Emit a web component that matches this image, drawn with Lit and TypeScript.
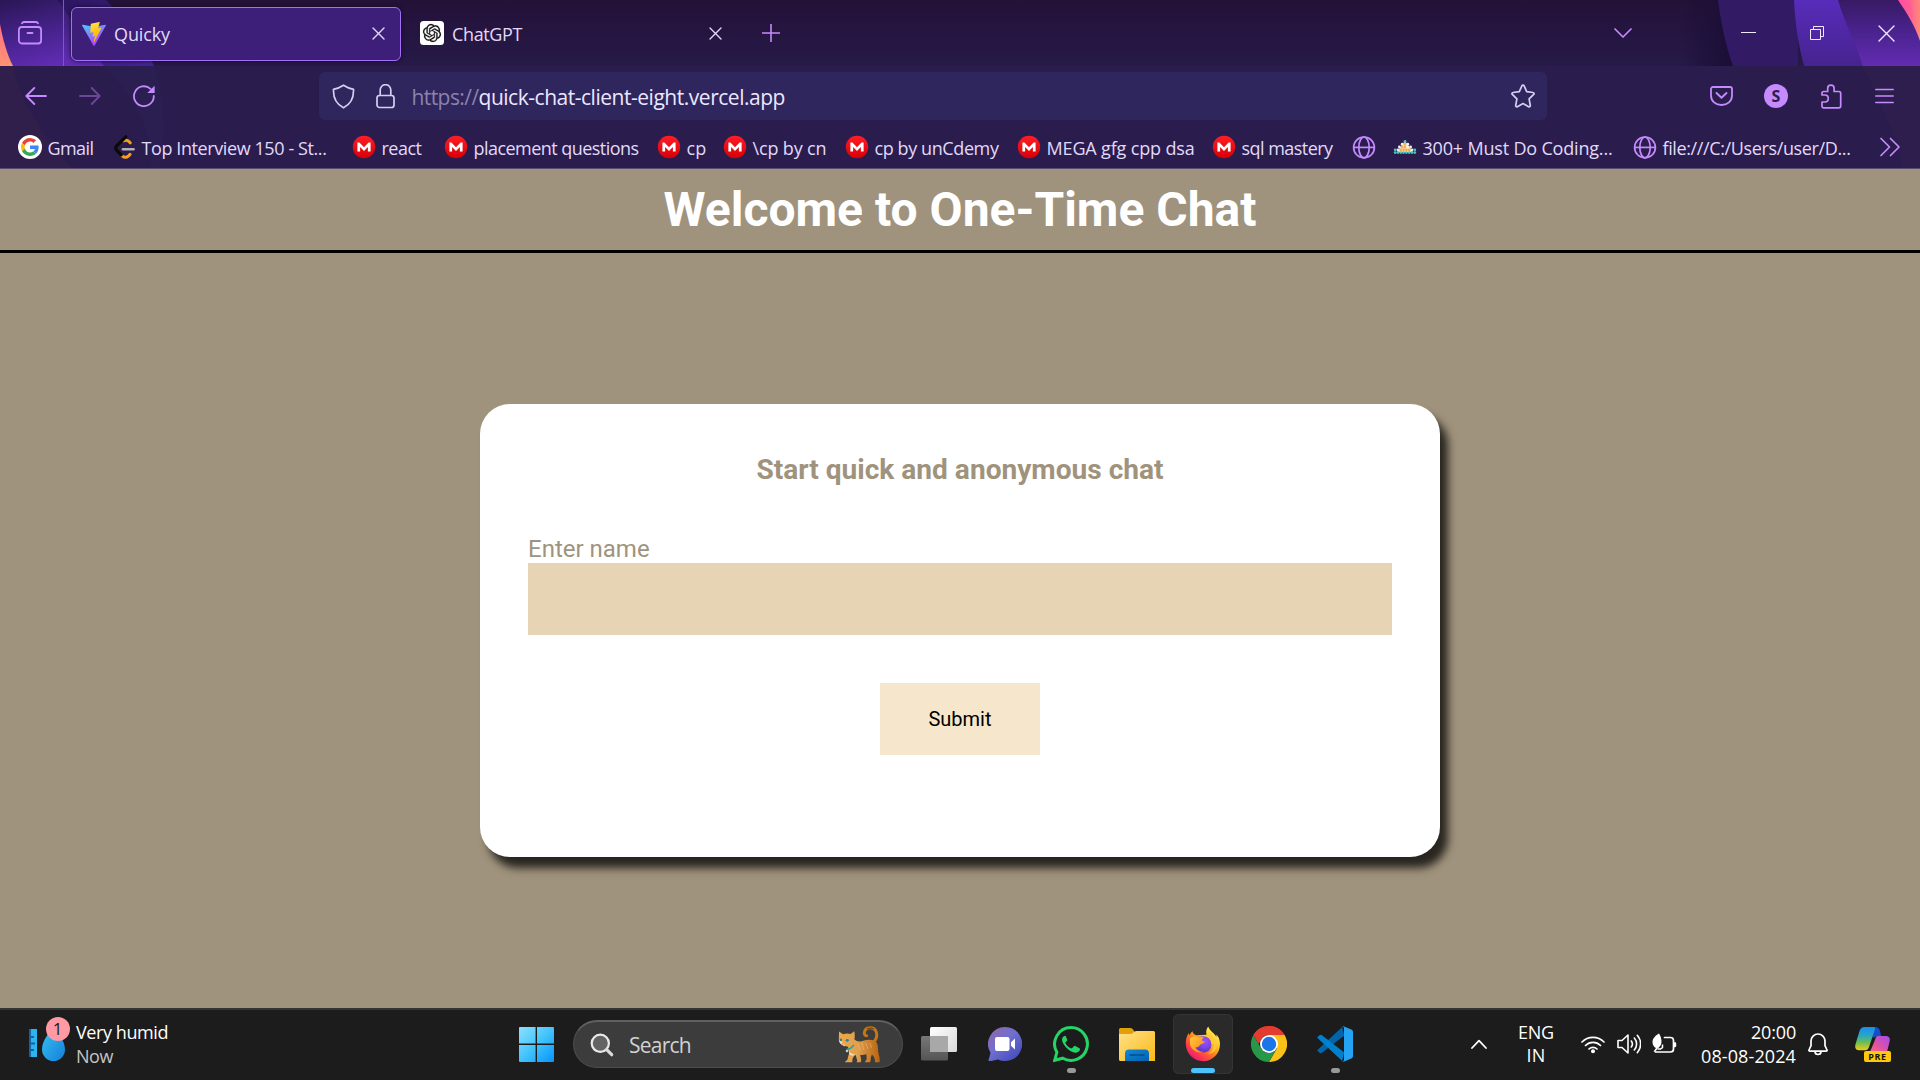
import { LitElement, html, svg, css, TemplateResult } from "lit";
import { customElement, property } from "lit/decorators.js";

/** A one-line label whose letter spacing is tuned so that it fills a set width. */
@customElement("fitted-text")
class FittedText extends LitElement {
  @property({ type: Number }) width = 0;
  static styles = css`
    :host { display: block; white-space: pre; flex: none; }
    .label { display: inline-block; }
  `;
  firstUpdated() {
    const label = this.renderRoot.querySelector<HTMLElement>(".label")!;
    const count = (this.textContent || "").length || 1;
    const natural = label.getBoundingClientRect().width;
    label.style.letterSpacing = `${(this.width - natural) / count}px`;
    this.style.width = `${this.width}px`;
  }
  render() {
    return html`<span class="label"><slot></slot></span>`;
  }
}

const icon = (w: number, h: number, body: TemplateResult, box = `0 0 ${w} ${h}`) =>
  html`<svg class="icon" width=${w} height=${h} viewBox=${box} fill="none">${body}</svg>`;

const googleIcon = icon(24, 24, svg`
  <circle cx="12" cy="12" r="12" fill="#fff"/>
  <g transform="translate(3 3) scale(.375)">
    <path fill="#EA4335" d="M24 9.5c3.54 0 6.71 1.22 9.21 3.6l6.85-6.85C35.9 2.38 30.47 0 24 0 14.62 0 6.51 5.38 2.56 13.22l7.98 6.19C12.43 13.72 17.74 9.5 24 9.5z"/>
    <path fill="#4285F4" d="M46.98 24.55c0-1.57-.15-3.09-.38-4.55H24v9.02h12.94c-.58 2.96-2.26 5.48-4.78 7.18l7.73 6c4.51-4.18 7.09-10.36 7.09-17.65z"/>
    <path fill="#FBBC05" d="M10.53 28.59c-.48-1.45-.76-2.99-.76-4.59s.27-3.14.76-4.59l-7.98-6.19C.92 16.46 0 20.12 0 24c0 3.88.92 7.54 2.56 10.78l7.97-6.19z"/>
    <path fill="#34A853" d="M24 48c6.48 0 11.93-2.13 15.89-5.81l-7.73-6c-2.15 1.45-4.92 2.3-8.16 2.3-6.26 0-11.57-4.22-13.47-9.91l-7.98 6.19C6.51 42.62 14.62 48 24 48z"/>
  </g>`);

const leetIcon = icon(24, 24, svg`
  <path d="M11.500 5.800c2.400-1.200 4.200-.6 5.800 1l.9 1.100M10 20.800c2.400 2 4.800 1.700 6.600 0l1.400-1.400" stroke="#f79f1b" stroke-width="3" stroke-linecap="round"/>
  <path d="M13.800 1.800 4.600 11a3 3 0 0 0 0 4.200l4.600 4.600" stroke="#0c0907" stroke-width="3.200" stroke-linecap="round"/>
  <path d="M11 14.300h10.500" stroke="#b3b1b0" stroke-width="2.600" stroke-linecap="round"/>`);

const megaIcon = icon(24, 24, svg`
  <defs><linearGradient id="mega" x2="0" y2="1"><stop stop-color="#ff1d26"/><stop offset="1" stop-color="#d70007"/></linearGradient></defs>
  <circle cx="12" cy="12" r="11.200" fill="url(#mega)"/>
  <path d="M5.400 16.400V7.500h2l4.600 4.700 4.600-4.700h2v8.900h-2.700v-4.300L12 16l-3.900-3.900v4.300z" fill="#fff"/>`);

const globeIcon = icon(24, 24, svg`
  <g stroke="#c58afd" stroke-width="1.700"><circle cx="12" cy="12.400" r="10.400"/><ellipse cx="12" cy="12.400" rx="5.200" ry="10.400"/><path d="M1.600 12.400h20.800"/></g>`);

const dots: [number, number, string][] = [];
["t", "wow", "wooww", "twoooowt", "tttttttt"].forEach((row, y) => {
  [...row].forEach((c, i) =>
    dots.push([12 + (i - (row.length - 1) / 2) * 2.8, 6.4 + y * 2.8, c === "t" ? "#4fc3c0" : c === "w" ? "#f2f0e6" : "#f4b04e"]));
});
const hillIcon = icon(24, 24, svg`<path d="M12 6 4 17h16z" fill="#f3e6cc"/>${dots.map(([x, y, c]) => svg`<circle cx=${x} cy=${y} r="1.400" fill=${c}/>`)}`);

const viteIcon = icon(24, 24, svg`
  <defs>
    <linearGradient id="viteA" x1="0" y1="0" x2=".6" y2="1"><stop stop-color="#41d1ff"/><stop offset="1" stop-color="#bd34fe"/></linearGradient>
    <linearGradient id="viteB" x1=".43" y1=".02" x2=".55" y2=".9"><stop stop-color="#ffea83"/><stop offset=".08" stop-color="#ffdd35"/><stop offset="1" stop-color="#ffa800"/></linearGradient>
  </defs>
  <path fill="url(#viteA)" d="M255.153 37.938L134.897 252.976c-2.483 4.44-8.862 4.466-11.382.048L.875 37.958c-2.746-4.814 1.371-10.646 6.827-9.67l120.385 21.517a6.537 6.537 0 0 0 2.322-.004l117.867-21.483c5.438-.991 9.574 4.796 6.877 9.62Z"/>
  <path fill="url(#viteB)" d="M185.432.063L96.44 17.501a3.268 3.268 0 0 0-2.634 3.014l-5.474 92.456a3.268 3.268 0 0 0 3.997 3.378l24.777-5.718c2.318-.535 4.413 1.507 3.936 3.838l-7.361 36.047c-.495 2.426 1.782 4.5 4.151 3.78l15.304-4.649c2.372-.72 4.652 1.36 4.15 3.788l-11.698 56.621c-.732 3.542 3.979 5.473 5.943 2.437l1.313-2.028l72.516-144.72c1.215-2.423-.88-5.186-3.54-4.672l-25.505 4.922c-2.396.462-4.435-1.77-3.759-4.114l16.646-57.705c.677-2.35-1.37-4.583-3.769-4.113Z"/>`, "0 0 256 257");

const gptIcon = icon(24, 24, svg`
  <rect width="24" height="24" rx="3.5" fill="#fff"/>
  <g transform="translate(3 3) scale(.75)"><path fill="#111" stroke="#111" stroke-width=".3" d="M22.2819 9.8211a5.9847 5.9847 0 0 0-.5157-4.9108 6.0462 6.0462 0 0 0-6.5098-2.9A6.0651 6.0651 0 0 0 4.9807 4.1818a5.9847 5.9847 0 0 0-3.9977 2.9 6.0462 6.0462 0 0 0 .7427 7.0966 5.98 5.98 0 0 0 .511 4.9107 6.051 6.051 0 0 0 6.5146 2.9001A5.9847 5.9847 0 0 0 13.2599 24a6.0557 6.0557 0 0 0 5.7718-4.2058 5.9894 5.9894 0 0 0 3.9977-2.9001 6.0557 6.0557 0 0 0-.7475-7.0729zm-9.022 12.6081a4.4755 4.4755 0 0 1-2.8764-1.0408l.1419-.0804 4.7783-2.7582a.7948.7948 0 0 0 .3927-.6813v-6.7369l2.02 1.1686a.071.071 0 0 1 .038.052v5.5826a4.504 4.504 0 0 1-4.4945 4.4944zm-9.6607-4.1254a4.4708 4.4708 0 0 1-.5346-3.0137l.142.0852 4.783 2.7582a.7712.7712 0 0 0 .7806 0l5.8428-3.3685v2.3324a.0804.0804 0 0 1-.0332.0615L9.74 19.9502a4.4992 4.4992 0 0 1-6.1408-1.6464zM2.3408 7.8956a4.485 4.485 0 0 1 2.3655-1.9728V11.6a.7664.7664 0 0 0 .3879.6765l5.8144 3.3543-2.0201 1.1685a.0757.0757 0 0 1-.071 0l-4.8303-2.7865A4.504 4.504 0 0 1 2.3408 7.872zm16.5963 3.8558L13.1038 8.364 15.1192 7.2a.0757.0757 0 0 1 .071 0l4.8303 2.7913a4.4944 4.4944 0 0 1-.6765 8.1042v-5.6772a.79.79 0 0 0-.407-.667zm2.0107-3.0231l-.142-.0852-4.7735-2.7818a.7759.7759 0 0 0-.7854 0L9.409 9.2297V6.8974a.0662.0662 0 0 1 .0284-.0615l4.8303-2.7866a4.4992 4.4992 0 0 1 6.6802 4.66zM8.3065 12.863l-2.02-1.1638a.0804.0804 0 0 1-.038-.0567V6.0742a4.4992 4.4992 0 0 1 7.3757-3.4537l-.142.0805L8.704 5.459a.7948.7948 0 0 0-.3927.6813zm1.0976-2.3654l2.602-1.4998 2.6069 1.4998v2.9994l-2.5974 1.4997-2.6067-1.4997Z"/></g>`);

const closeIcon = (size: number, color: string) =>
  icon(size, size, svg`<path d="M1 1l${size - 2} ${size - 2}M${size - 1} 1L1 ${size - 1}" stroke=${color} stroke-width="1.4" stroke-linecap="round"/>`);

const catIcon = icon(42, 38, svg`
  <defs><linearGradient id="fur" x1="0" x2="1"><stop stop-color="#f0a848"/><stop offset=".45" stop-color="#e0a050"/><stop offset="1" stop-color="#b86410"/></linearGradient></defs>
  <path d="M33.5 17.5c5-2.500 6.200-8 4.500-12.200-2.200-5-10.500-4.600-11.600.9-.3 1.800.6 3.700 2.200 3.500" stroke="#c47618" stroke-width="3" stroke-linecap="round"/>
  <path d="M29 3.200c1.800-1.400 5-1.500 6.800.1" stroke="#7d4a10" stroke-width="1.200"/>
  <path fill="url(#fur)" d="M1 5.500 5 8.300c2.500-1 5.400-1 7.600-.2L16.300 5.200c.6 3 .6 5.600.1 8.400 2.600 2.100 5.500 2.500 9.600 1 4.500-1.600 9.800-1.100 12.200 1.500 2.300 2.800 1.500 6.900 2.200 10.400.6 3.300 1.900 6.500 1.100 9.700h-4.500c.3-3.200-.9-5.600-3-7.700-.9 2.200-1.500 3.400-1.200 5.500l-.8 2.300h-5.200c.7-1.600 1.800-1.700 1.900-3.700l-.4-4.500c-2.100 1.100-4.200 1.100-6 .7l.9 5.300-.4 2.200h-4.200l.7-1.700-2-6.500-2.700 4.500-.4 3.700H6.800c.9-1.500 2.400-1.800 2.800-3.300l1.600-6.400c-1-2.500-1-4.300-1.100-5.800C3.500 20 0 16.500.9 12z"/>
  <path d="M1.400 14c2 1 4.500 3 5.600 6.400C3.300 19 .9 17.200 1.400 14zM11 25c1.500 2.500 4 4 8 3.500-3 1.500-6 1.200-7.600-.3z" fill="#f8dfae"/>
  <path d="M20 18l2 6M24 17l2 7M28 17l2 6M32 17l1.500 5" stroke="#f3ca81" stroke-width="1" opacity=".45"/>
  <ellipse cx="2.900" cy="13.800" rx="1.200" ry="1.400" fill="#2a8197"/><ellipse cx="9.300" cy="14.300" rx="1.600" ry="1.400" fill="#2a8197"/>
  <circle cx="4.700" cy="17.700" r="1" fill="#e78879"/>
  <path d="M8.500 23.200c3 0 5.500-1.300 7.200-4.300" stroke="#1ea294" stroke-width="1.500"/>
  <circle cx="9" cy="25" r="1.300" fill="#b7d5ce"/>`);

const searchIcon = icon(24, 24, svg`
  <circle cx="10.300" cy="10.300" r="8.600" fill="#636363" stroke="#e9e9e9" stroke-width="2.200"/>
  <path d="M16.700 16.700l5 5" stroke="#dcdcdc" stroke-width="3.200" stroke-linecap="round"/>`);

const startIcon = icon(35, 35, svg`
  <defs><linearGradient id="win" x2="1" y2="1"><stop stop-color="#8ee0ff"/><stop offset=".5" stop-color="#42c4fb"/><stop offset="1" stop-color="#0494ff"/></linearGradient></defs>
  <path fill="url(#win)" d="M1 0h15.600v16.600H0V1a1 1 0 0 1 1-1zM18 0h16a1 1 0 0 1 1 1v15.600H18zM0 18h16.600v17H1a1 1 0 0 1-1-1zM18 18h17v16a1 1 0 0 1-1 1H18z"/>`);

const taskViewIcon = icon(36, 34, svg`
  <defs>
    <linearGradient id="tvA" x2="1" y2="1"><stop stop-color="#fff"/><stop offset="1" stop-color="#dadada"/></linearGradient>
    <linearGradient id="tvB" x2="0" y2="1"><stop stop-color="#777"/><stop offset="1" stop-color="#555"/></linearGradient>
  </defs>
  <rect y="9" width="27" height="24.500" rx="1.500" fill="url(#tvB)"/>
  <rect x="9" width="27" height="25" rx="1.500" fill="url(#tvA)"/>
  <path d="M9 9h18v16H10.500A1.500 1.500 0 0 1 9 23.500z" fill="#a8a8a8"/>`);

const chatIcon = icon(34, 34, svg`
  <defs><linearGradient id="chat" x1=".1" y1=".1" x2=".8" y2=".9"><stop stop-color="#8d68ad"/><stop offset=".45" stop-color="#7070cf"/><stop offset="1" stop-color="#4a4fc0"/></linearGradient></defs>
  <path fill="url(#chat)" d="M17 0a17 17 0 1 1-7 32.400c-3.100.9-6.500 1.600-8.700 1.500-1-.1-1-.8-.7-1.400.9-2.200 1.600-4.700 1.900-6.700A17 17 0 0 1 17 0z"/>
  <rect x="7" y="10" width="14.500" height="14" rx="2" fill="#fff"/><path d="M23 15.200l4-3.700v11l-4-3.700z" fill="#fff"/>`);

const whatsappIcon = icon(36, 36, svg`
  <path d="M18 1.600A16.400 16.400 0 1 1 9.800 32.200L1.700 34.300l2.200-8A16.400 16.400 0 0 1 18 1.600z" stroke="#25d366" stroke-width="3"/>
  <path fill="#25d366" d="M12.200 9.700c-1.700.1-3.300 2.100-3.200 4.300.3 3 3 6.700 6 9.300 2.800 2.200 5.500 3.500 8 3.400 2.200-.2 4-1.900 4-3.400 0-.7-.3-1-1-1.400l-3.700-1.900c-.6-.3-1.100-.2-1.600.4l-1.400 1.700c-.4.4-.8.4-1.400.2-2.300-1-4.200-2.800-5.300-4.900-.3-.6-.2-.9.2-1.300.7-.7 1.300-1.400 1.400-2 .1-.4-1-3-1.400-3.800-.2-.5-.4-.6-.6-.6z"/>`);

const folderIcon = icon(36, 33, svg`
  <defs>
    <linearGradient id="fo" x2="1" y2="1"><stop stop-color="#ffe18a"/><stop offset="1" stop-color="#fcb913"/></linearGradient>
    <linearGradient id="fb" x2="1" y2="1"><stop stop-color="#0f8ad8"/><stop offset="1" stop-color="#0560ae"/></linearGradient>
  </defs>
  <path d="M0 1.500A1.500 1.500 0 0 1 1.500 0h9.800c1 0 1.700.4 2.300 1.100L15.500 3.500V9H0z" fill="#e0a008"/>
  <path d="M0 6h11c1.600 0 2.600-.5 3.400-1.300.8-.9 1.600-1.700 3-1.700h17.100A1.500 1.500 0 0 1 36 4.500V33H1.500A1.500 1.500 0 0 1 0 31.500z" fill="url(#fo)"/>
  <path d="M6 33v-7.500a4 4 0 0 1 4-4h16a4 4 0 0 1 4 4V33z" fill="url(#fb)"/>
  <path d="M11 27h14" stroke="#064b88" stroke-width="1.500" stroke-linecap="round"/>`);

const firefoxIcon = icon(36, 36, svg`
  <defs>
    <linearGradient id="ffA" x1=".85" y1=".1" x2=".2" y2=".95"><stop stop-color="#fff44f"/><stop offset=".3" stop-color="#ffc52e"/><stop offset=".55" stop-color="#ff7a20"/><stop offset=".8" stop-color="#ff3750"/><stop offset="1" stop-color="#e01a78"/></linearGradient>
    <radialGradient id="ffB" cx=".6" cy=".3" r=".8"><stop stop-color="#a052f5"/><stop offset=".55" stop-color="#7542e5"/><stop offset="1" stop-color="#4a2aa8"/></radialGradient>
    <linearGradient id="ffC" x2="1" y2="1"><stop stop-color="#ffcb35"/><stop offset="1" stop-color="#ff7b22"/></linearGradient>
  </defs>
  <path fill="url(#ffA)" d="M23.200.5c-2 2.700-2.400 5.300-1.700 8.300l-10 .4C8.500 8.200 7.700 6.800 7.500 5.200 5.800 6.400 5.100 7.800 4.800 9.200c-.5.1-.9-1.300-.8-2.400C1.400 10.300.6 14 .8 18.500 1.200 27.700 8.700 35.200 18 35.200s17.200-7.500 17-17.500c-.1-3.900-1.500-7.300-3.700-9.200.2 1.200.2 2 .1 2.600C29.400 6.900 24.700 5 23.200.5z"/>
  <circle cx="18.200" cy="18.400" r="8.200" fill="url(#ffB)"/>
  <path d="M5 12.500c2.600-2.300 5.800-2.500 8.200-1 1.900-.8 4-.7 5.900.1-1.400.8-2.400 1.800-1.900 3 .3.700 1.900.8 2.600 1.100-.4 1.900-2.900 1.900-4.500 3.100-1.500 1.200-1.300 3-4.800 2.500 1.500 3.200 5 4.800 8.300 4.500-5.800 2.300-12.300-1.500-13.800-7.300z" fill="url(#ffC)"/>
  <path d="M22 10c3.500 1.500 5.200 4.300 4.500 8.500 1.200-.8 1.500-2 1.500-3 2.200 5-.5 10.500-5.500 12.300 6 .5 10.300-4.700 9.400-10.800C31.200 12 27 9 23.500 6z" fill="#ffcd32" opacity=".8"/>`);

const chromeIcon = icon(36, 36, svg`
  <path d="M2.400 9A18 18 0 0 1 33.600 9H18z" fill="#ea4335"/>
  <path d="M33.600 9A18 18 0 0 1 18 36l7.800-13.500L18 9z" fill="#fbc116"/>
  <path d="M18 36A18 18 0 0 1 2.400 9l7.800 13.500A9 9 0 0 0 25.800 22.500z" fill="#279847"/>
  <path d="M2.400 9C6 3.500 11.500 0 18 0s12.400 3.600 15.600 9H18a9 9 0 0 0-8.200 5.300L7.700 18z" fill="#e33b2e"/>
  <circle cx="18" cy="18" r="9" fill="#fff"/><circle cx="18" cy="18" r="7.200" fill="#1b74e8"/>`);

const codeIcon = icon(36, 36, svg`
  <path d="M1.300 23.300 25.200.9 27 9.700 5 26.700c-.9.7-1.800.7-2.500 0L.8 25.200c-.7-.7-.5-1.300.5-1.900z" fill="#0065a9"/>
  <path d="M1.300 12.700 25.200 35.100 27 26.300 5 9.300c-.9-.7-1.800-.7-2.500 0L.8 10.800c-.7.7-.5 1.300.5 1.900z" fill="#007fcc"/>
  <path d="M24.300.9c.6-.7 1.300-.9 2.200-.7l7.800 3.300c1.100.5 1.700 1.300 1.700 2.400v24.200c0 1.100-.6 1.900-1.700 2.400l-7.800 3.300c-.9.2-1.600 0-2.200-.7 1 .9 2.700.2 2.700-1.100V2C27 .7 25.300 0 24.300.9z" fill="#23a3f2"/>`);

const copilotIcon = icon(36, 34, svg`
  <defs>
    <linearGradient id="coA" x2="0" y2="1"><stop stop-color="#1c8cf0"/><stop offset=".35" stop-color="#25a5c9"/><stop offset=".65" stop-color="#67bd57"/><stop offset="1" stop-color="#f2ca18"/></linearGradient>
    <linearGradient id="coB" x1="1" y1="0" x2=".1" y2="1"><stop stop-color="#a44bee"/><stop offset=".5" stop-color="#e4539f"/><stop offset="1" stop-color="#ff8161"/></linearGradient>
  </defs>
  <path d="M11 0h9c3 0 4.300 1.500 5 4l1.200 5h-4.700l-3 2z" fill="#154ec9"/>
  <path d="M9.500 0h8.600c2 0 2.200 1 1.700 2.700L14 20c-.8 2.300-1.800 3.200-4 3.200H4c-3.300 0-4.500-2.500-3.500-6L4.200 5C5.200 1.700 6.700 0 9.500 0z" fill="url(#coA)"/>
  <path d="M22.500 9h8.300c3.300 0 4.700 2.300 3.800 5.500L32 25c-.9 3-2.500 5-5 5H8.500c2-.3 5.500-2.500 6.200-4.500l5.500-13C20.800 10.500 21.300 9 22.500 9z" fill="url(#coB)"/>`);

/** Label, space from this bookmark's left edge to the next one's, label width. */
const bookmarks: [TemplateResult, string, number, number][] = [
  [googleIcon, "Gmail", 94, 46],
  [leetIcon, "Top Interview 150 - St...", 240, 185],
  [megaIcon, "react", 92, 40],
  [megaIcon, "placement questions", 213, 165],
  [megaIcon, "cp", 66, 20],
  [megaIcon, "\\cp by cn", 122, 74],
  [megaIcon, "cp by unCdemy", 172, 124],
  [megaIcon, "MEGA gfg cpp dsa", 195, 148],
  [megaIcon, "sql mastery", 140, 91],
  [globeIcon, "", 41, 0],
  [hillIcon, "300+ Must Do Coding...", 240, 190],
  [globeIcon, "file:///C:/Users/user/D...", 246, 188],
];

const apps: [TemplateResult, string][] = [
  [taskViewIcon, ""], [chatIcon, ""], [whatsappIcon, "open"], [folderIcon, ""],
  [firefoxIcon, "active"], [chromeIcon, ""], [codeIcon, "open"],
];

@customElement("app-root")
class AppRoot extends LitElement {
  static styles = css`
    :host {
      display: flex; flex-direction: column; width: 1920px; height: 1080px; overflow: hidden;
      font: 18px/24px "Open Sans", "Noto Sans", sans-serif; color: #e2d9fa; background: #a0937d;
    }
    .icon { display: block; flex: none; }
    .row { display: flex; align-items: center; }

    .browser { position: relative; flex: none; height: 169px; background: #2a1d4d; overflow: hidden; }
    .art { position: absolute; inset: 0; display: block; }
    .bars { position: relative; display: flex; flex-direction: column; }

    .tabs { height: 66px; }
    .history { width: 64px; height: 66px; padding-left: 18px; box-sizing: border-box; border-right: 1px solid #7d5caa; margin-right: 7px; }
    .tab { box-sizing: border-box; height: 54px; width: 330px; padding: 0 16px 0 11px; }
    .tab.selected { border: 1px solid #a36ff8; border-radius: 6px; background: #3d1f79; box-shadow: 0 0 4px #120a28; padding: 0 15px 0 10px; }
    .tabs .selected { margin-top: 1px; }
    .tab fitted-text { margin-left: 8px; padding-top: 1px; }
    .grow { flex: 1; }
    .tab.idle { margin-left: 8px; width: 324px; padding-right: 11px; }
    .plus { margin-left: 29px; }
    .list { margin-right: 109px; }
    .mini { margin-right: 54px; }
    .restore { margin-right: 54px; }
    .quit { margin-right: 25px; }

    .nav { height: 62px; padding-left: 25px; margin-top: -1px; }
    .nav .back { margin-right: 32px; }
    .nav .fwd { margin-right: 32px; }
    .address { box-sizing: border-box; width: 1228px; height: 48px; margin: 0 163px 0 164px; padding: 0 12px 0 13px; border-radius: 6px; background: #2e265c; font-size: 21px; }
    .address fitted-text { padding-top: 2px; }
    .shield { margin-right: 21px; }
    .lock { margin-right: 16.500px; }
    .scheme { color: #8c82ac; }
    .host { color: #ece6ff; }
    .account { width: 24px; height: 24px; border-radius: 50%; background: #c58afd; color: #2a1d4d; font: 700 16px/24px "Open Sans", sans-serif; text-align: center; margin: 0 33px 0 31px; }
    .menu { margin-left: 33px; }

    .bookmarks { height: 40px; padding-left: 18px; }
    .bookmark { display: flex; align-items: center; gap: 5.500px; flex: none; }
    .bookmark fitted-text { padding-top: 1px; }

    .page { flex: none; height: 839px; display: flex; flex-direction: column; align-items: center; font-family: Roboto, sans-serif; color: #a0937d; }
    .banner { align-self: stretch; height: 81px; border-bottom: 3px solid #000; display: flex; justify-content: center; align-items: center; color: #fff; }
    h1 { margin: 0; font-size: 48px; line-height: 56px; font-weight: 700; }
    .card { box-sizing: border-box; width: 960px; height: 453px; margin-top: 151px; padding: 48px; border-radius: 30px; background: #fff; box-shadow: 8px 11px 8px rgba(0, 0, 0, .75); display: flex; flex-direction: column; }
    h3 { margin: 1px 0 49px; align-self: center; font-size: 28.080px; line-height: 33px; font-weight: 700; }
    label { font-size: 24px; line-height: 28px; }
    input { box-sizing: border-box; width: 100%; height: 72px; border: 0; background: #e7d4b5; margin-bottom: 48px; }
    button { width: 160px; height: 72px; border: 0; padding: 0; background: #f6e6cb; font: 20px Roboto, sans-serif; color: #000; align-self: center; }

    .taskbar { flex: none; box-sizing: border-box; height: 72px; padding-bottom: 2px; border-top: 2px solid #343434; background: #1c1c1c; color: #fff; }
    .gadget { position: relative; margin-left: 29px; width: 47px; height: 38px; }
    .notice { position: absolute; left: 16.500px; top: -8px; width: 24px; height: 24px; border-radius: 50%; background: #ff99a4; color: #1c1c1c; font-size: 17px; line-height: 24px; text-align: center; }
    .weather { width: 443px; }
    .dim { color: #c4c4c4; }
    .search { box-sizing: border-box; width: 330px; height: 48px; margin: 0 3px 0 19px; padding: 0 22px 0 16px; border: 1px solid #4c4c4c; border-top: 2px solid #606060; border-radius: 24px; background: #3c3c3c; color: #d2d2d2; font-size: 21px; }
    .search fitted-text { margin-left: 15px; }
    .slot { width: 66px; height: 60px; display: flex; justify-content: center; }
    .app { box-sizing: border-box; width: 60px; height: 60px; display: flex; flex-direction: column; align-items: center; border-radius: 6px; }
    .app.active { background: #2a2a2a; box-shadow: inset 0 0 0 1px #343434; }
    .glyph { height: 60px; display: flex; align-items: center; }
    .mark { width: 9px; height: 5px; margin-top: -6px; border-radius: 3px; background: #999; flex: none; }
    .app.active .mark { width: 24px; background: #4cc2ff; }
    .apps { display: flex; width: 565px; }
    .lang { display: flex; flex-direction: column; align-items: center; width: 36px; margin: 0 27px 0 31px; line-height: 23px; }
    .status { gap: 11.500px; }
    .clock { display: flex; flex-direction: column; align-items: flex-end; margin: 0 12px 0 24px; }
    .copilot { position: relative; margin-left: 27px; }
    .pre { position: absolute; right: 0; bottom: -1px; width: 27px; height: 11px; border-radius: 2px; background: #fdc80d; color: #17130a; font: 700 9px/11px "Open Sans", sans-serif; text-align: center; letter-spacing: .6px; }
  `;

  private art() {
    return html`<svg class="art" width="1920" height="169" viewBox="0 0 1920 169">
      <defs>
        <linearGradient id="sky" x2="0" y2="1"><stop stop-color="#241137"/><stop offset=".35" stop-color="#24143e"/><stop offset="1" stop-color="#261a48"/></linearGradient>
        <linearGradient id="glow" x1=".1" y1="0" x2=".5" y2="1"><stop stop-color="#2c1758"/><stop offset=".5" stop-color="#45228a"/><stop offset="1" stop-color="#612cb4"/></linearGradient>
        <linearGradient id="wave" x2="1" y2="1"><stop stop-color="#2c1660"/><stop offset="1" stop-color="#47259a"/></linearGradient>
        <linearGradient id="coral" x2="0" y2="1"><stop stop-color="#ff6f86"/><stop offset="1" stop-color="#ff9472"/></linearGradient>
        <linearGradient id="shade"><stop stop-color="#1a0e34" stop-opacity="0"/><stop offset="1" stop-color="#1a0e36"/></linearGradient>
        <linearGradient id="blue" x2="0" y2="1"><stop stop-color="#572cba"/><stop offset="1" stop-color="#47238f"/></linearGradient>
        <linearGradient id="violet" x2="0" y2="1"><stop stop-color="#371a64"/><stop offset=".5" stop-color="#4b2390"/><stop offset="1" stop-color="#632cb2"/></linearGradient>
        <linearGradient id="pink" x2="1"><stop stop-color="#ff4aa6"/><stop offset=".5" stop-color="#ff5c96"/><stop offset="1" stop-color="#ff8a76"/></linearGradient>
      </defs>
      <rect width="1920" height="66" fill="url(#sky)"/>
      <path d="M106 0c20 20 38 42 48 66H60V0z" fill="url(#wave)"/>
      <path d="M0 0h58c16 24 34 50 46 66H0z" fill="url(#glow)"/>
      <path d="M0 24c3 16 7 30 13 42H0z" fill="url(#coral)"/>
      <path d="M1680 0h38c3 24 8 46 15 66h-53z" fill="url(#shade)"/>
      <path d="M1718 0h80v66h-65c-7-20-12-42-15-66z" fill="#321a65"/>
      <path d="M1794 0h60l20 66h-70c-6-22-9-44-10-66z" fill="url(#blue)"/>
      <path d="M1838 0h82v66h-57c-8-24-18-42-25-66z" fill="url(#violet)"/>
      <path d="M1898 0h22v41c-5-15-13-28-22-41z" fill="url(#pink)"/>
      <rect y="66" width="1920" height="103" fill="#2a1d4d"/>
      <path d="M0 66h13c8 40 34 75 60 103H0z" fill="#3a2148" opacity=".4"/>
      <path d="M104 66h50c12 34 12 70 6 103h-10c4-38-16-72-46-103z" fill="#2f2158" opacity=".3"/>
      <path d="M1863 66h57v103h-17c-8-38-24-70-40-103z" fill="#32204f" opacity=".5"/>
      <rect y="168" width="1920" height="1" fill="#5a4c70"/>
    </svg>`;
  }

  render() {
    const p = "#c58afd";
    const l = "#d8cdf2";
    return html`
      <header class="browser">
        ${this.art()}
        <div class="bars">
          <div class="tabs row">
            <div class="history row">${icon(24, 24, svg`<g stroke=${p} stroke-width="1.800" stroke-linecap="round" stroke-linejoin="round"><rect x=".9" y="6" width="22.200" height="16.500" rx="3"/><path d="M4 2.300c.5-.9 1.200-1.300 2-1.300h12c.8 0 1.500.4 2 1.300M9.500 12h5"/></g>`)}</div>
            <div class="tab selected row">${viteIcon}<fitted-text .width=${56}>Quicky</fitted-text><span class="grow"></span>${closeIcon(13, "#e2d9fa")}</div>
            <div class="tab idle row">${gptIcon}<fitted-text .width=${70}>ChatGPT</fitted-text><span class="grow"></span>${closeIcon(13, "#e2d9fa")}</div>
            <div class="plus">${icon(18, 18, svg`<path d="M9 .5v17M.5 9h17" stroke=${p} stroke-width="1.600" stroke-linecap="round"/>`)}</div>
            <span class="grow"></span>
            <div class="list">${icon(18, 10, svg`<path d="M1 1l8 8 8-8" stroke=${p} stroke-width="1.700" stroke-linecap="round" stroke-linejoin="round"/>`)}</div>
            <div class="mini">${icon(15, 3, svg`<path d="M0 .5h15" stroke="#f0eaff" stroke-width="1"/>`)}</div>
            <div class="restore">${icon(14, 14, svg`<path d="M.5 3.500h10v10H.5zM3.500 3.500v-3h10v10h-3" stroke="#f0eaff"/>`)}</div>
            <div class="quit">${closeIcon(17, "#f0eaff")}</div>
          </div>
          <div class="nav row">
            <div class="back">${icon(22, 18, svg`<path d="M21 9H1.500M9.300 1 1.300 9l8 8" stroke=${p} stroke-width="1.800" stroke-linecap="round" stroke-linejoin="round"/>`)}</div>
            <div class="fwd">${icon(22, 18, svg`<path d="M1 9h19.500M12.700 1l8 8-8 8" stroke="#6c4799" stroke-width="1.800" stroke-linecap="round" stroke-linejoin="round"/>`)}</div>
            <div class="reload">${icon(22, 22, svg`<path d="M20.800 11A9.900 9.900 0 1 1 17.500 3.800" stroke=${p} stroke-width="1.800" stroke-linecap="round"/><path d="M21.600.8v7.300h-7.300z" fill=${p}/>`)}</div>
            <div class="address row">
              <div class="shield">${icon(23, 25, svg`<path d="M11.500 1.200c3 2 6.300 3.300 10 4.200.4 8.300-2.500 14.700-10 18.400C4 20.100 1.100 13.700 1.500 5.400c3.700-.9 7-2.200 10-4.200z" stroke=${l} stroke-width="1.700" stroke-linejoin="round"/>`)}</div>
              <div class="lock">${icon(19, 25, svg`<g stroke=${l} stroke-width="1.700"><rect x="1" y="11.500" width="17" height="12" rx="2.500"/><path d="M4.200 11.500V6a5.300 5.300 0 0 1 10.600 0v5.500"/></g>`)}</div>
              <fitted-text class="scheme" .width=${67}>https://</fitted-text>
              <fitted-text class="host" .width=${306.5}>quick-chat-client-eight.vercel.app</fitted-text>
              <span class="grow"></span>
              ${icon(24, 24, svg`<path d="M11 1.700c.4-.9 1.600-.9 2 0l2.700 5.900 6.300.9c1 .1 1.400 1.200.7 1.900l-4.600 4.500 1.200 6.600c.1 1-.8 1.600-1.700 1.200L12 19.500l-5.600 3.200c-.9.4-1.800-.2-1.700-1.200l1.200-6.600-4.600-4.500c-.7-.7-.3-1.800.7-1.900l6.300-.9z" stroke=${l} stroke-width="1.700" stroke-linejoin="round"/>`)}
            </div>
            ${icon(23, 20, svg`<path d="M3 1h17a2 2 0 0 1 2 2v6.500C22 15 17.500 19 11.500 19S1 15 1 9.500V3a2 2 0 0 1 2-2z" stroke=${p} stroke-width="1.800"/><path d="M6.500 7l5 4.800 5-4.800" stroke=${p} stroke-width="1.900" stroke-linecap="round" stroke-linejoin="round"/>`)}
            <div class="account">S</div>
            ${icon(21, 25, svg`<path d="M1 11V9.200C1 8 1.700 7.500 2.700 7.500h4V4.300a3.200 3.200 0 0 1 6.400 0v3.200h4.700c1.200 0 1.900.6 1.900 1.800V22c0 1.200-.7 1.800-1.900 1.800H2.700C1.600 23.800 1 23.200 1 22v-4h2.800c4.600 0 4.600-7 0-7z" stroke=${p} stroke-width="1.700" stroke-linejoin="round"/>`)}
            <div class="menu">${icon(19, 16, svg`<path d="M.8 1.500h17.400M.8 8h17.400M.8 14.500h17.400" stroke=${p} stroke-width="1.700" stroke-linecap="round"/>`)}</div>
          </div>
          <div class="bookmarks row">
            ${bookmarks.map(([mark, name, pitch, width]) => html`
              <div class="bookmark" style="width:${pitch}px">${mark}${name ? html`<fitted-text .width=${width}>${name}</fitted-text>` : ""}</div>`)}
            ${icon(22, 20, svg`<path d="M2 1.500l8.500 8.500L2 18.500M11.500 1.500L20 10l-8.500 8.500" stroke=${p} stroke-width="1.700" stroke-linecap="round" stroke-linejoin="round"/>`)}
          </div>
        </div>
      </header>

      <main class="page">
        <div class="banner"><h1>Welcome to One-Time Chat</h1></div>
        <form class="card">
          <h3>Start quick and anonymous chat</h3>
          <label for="name">Enter name</label>
          <input id="name" type="text" />
          <button type="button">Submit</button>
        </form>
      </main>

      <footer class="taskbar row">
        <div class="gadget">
          ${icon(38, 38, svg`
            <defs><linearGradient id="drop" x2="1" y2="1"><stop stop-color="#37c2f4"/><stop offset="1" stop-color="#1480d8"/></linearGradient></defs>
            <path d="M0 8h8v28H0z" fill="#2db4ee"/><path d="M0 8h2v28H0zM2 15h3v2H2zM2 21.500h4v2H2zM2 28h3v2H2z" fill="#1163a8"/>
            <path d="M24.500 6c3.500 5 11.500 13 11.500 22.500a11.500 11.500 0 0 1-23 0C13 19 21 11 24.500 6z" fill="url(#drop)"/>`, "0 4 38 38")}
          <span class="notice">1</span>
        </div>
        <div class="weather">
          <fitted-text .width=${92}>Very humid</fitted-text>
          <fitted-text class="dim" .width=${37}>Now</fitted-text>
        </div>
        ${startIcon}
        <div class="search row">${searchIcon}<fitted-text .width=${62}>Search</fitted-text><span class="grow"></span>${catIcon}</div>
        <div class="apps">
          ${apps.map(([glyph, state]) => html`<div class="slot"><div class="app ${state}"><div class="glyph">${glyph}</div>${state ? html`<span class="mark"></span>` : ""}</div></div>`)}
        </div>
        ${icon(16, 10, svg`<path d="M1 9l7-7.300L15 9" stroke="#fff" stroke-width="1.800" stroke-linecap="round" stroke-linejoin="round"/>`)}
        <div class="lang"><fitted-text .width=${36}>ENG</fitted-text><fitted-text .width=${19}>IN</fitted-text></div>
        <div class="status row">
          ${icon(24, 20, svg`<g stroke="#fff" stroke-width="1.700" stroke-linecap="round"><path d="M1 8a15.500 15.500 0 0 1 22 0M4.500 11.500a10.600 10.600 0 0 1 15 0M8 15a5.700 5.700 0 0 1 8 0"/></g><circle cx="12" cy="17.300" r="2" fill="#fff"/>`)}
          ${icon(24, 22, svg`<g stroke="#fff" stroke-width="1.600" stroke-linecap="round" stroke-linejoin="round"><path d="M1 7.500h4L11 2v18l-6-5.500H1z"/><path d="M14.300 8a5 5 0 0 1 0 6M17.300 5a9 9 0 0 1 0 12M20.300 2.300a13 13 0 0 1 0 17.400" /></g>`)}
          ${icon(25, 22, svg`<path d="M12.500 4.500h6a3 3 0 0 1 3 3v8.500a3 3 0 0 1-3 3H3.500" stroke="#fff" stroke-width="1.700" stroke-linecap="round"/><path d="M22 9.200h1c.8 0 1.200.5 1.200 1.200v2.600c0 .7-.4 1.200-1.200 1.200h-1z" fill="#fff"/><path d="M7 .5C2.500 3 0 6.500.6 10c.3 2.400 1.500 4 3.400 5l-2.500 3.500 1.700.5 2.400-3.600c3-1.800 4.600-5 3.600-9.400C8.900 3.500 8 2.500 7 .5z" fill="#fff"/><path d="M10.500 11.500v3l-2 1.500h-3" stroke="#fff" stroke-width="1.500"/>`)}
        </div>
        <div class="clock"><fitted-text .width=${45}>20:00</fitted-text><fitted-text .width=${95}>08-08-2024</fitted-text></div>
        ${icon(20, 23, svg`<path d="M10 1a7 7 0 0 1 7 7v4.700l2 4.300c.2.700-.1 1.200-.9 1.200H1.900c-.8 0-1.100-.5-.9-1.200l2-4.300V8a7 7 0 0 1 7-7zM7 18.500a3 3 0 0 0 6 0" stroke="#fff" stroke-width="1.700" stroke-linejoin="round"/>`)}
        <div class="copilot">${copilotIcon}<span class="pre">PRE</span></div>
      </footer>`;
  }
}
